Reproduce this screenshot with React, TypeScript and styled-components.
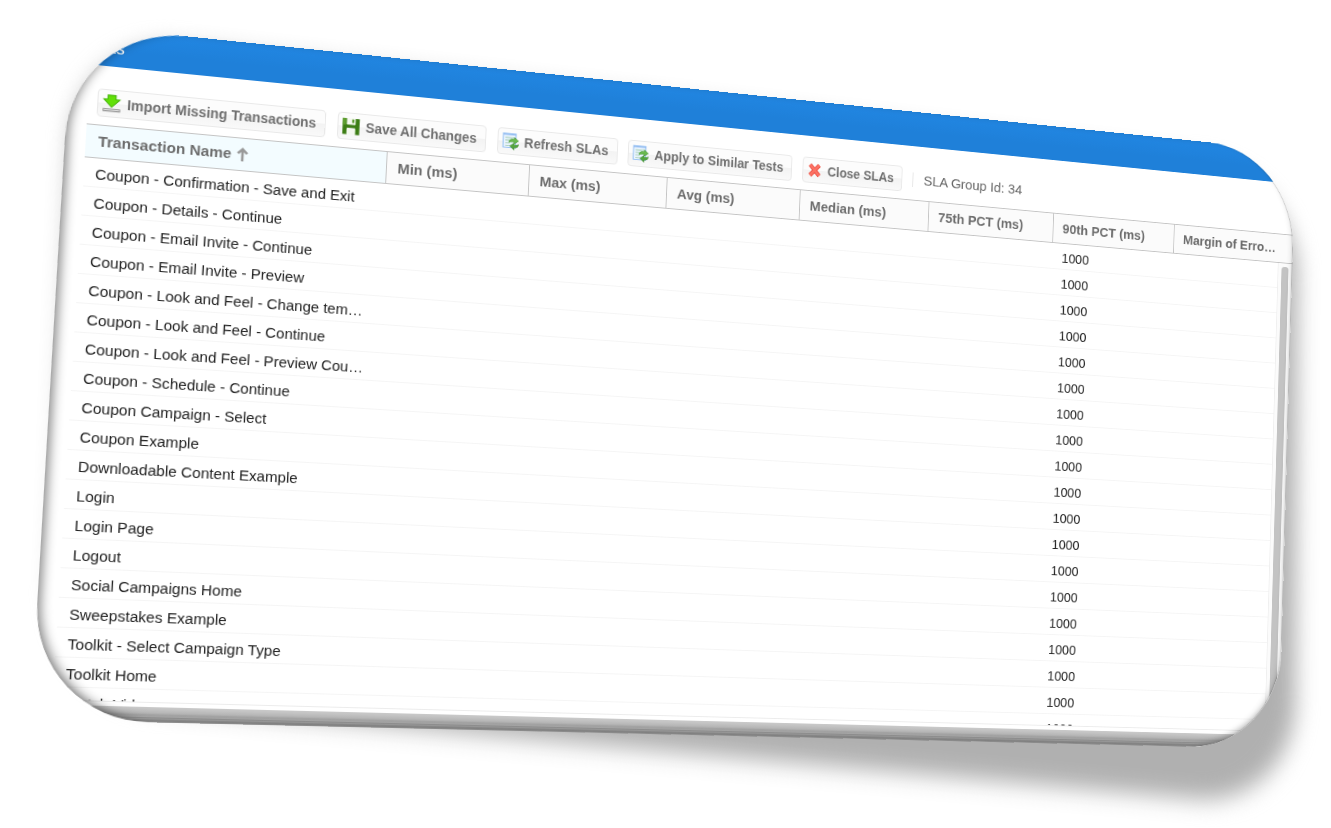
import React from "react";
import styled, { createGlobalStyle, css } from "styled-components";

type Pt = [number, number];

const W = 1373;
const H = 685;

/* Solves the projective map that sends four source points to four screen points. */
function project(src: Pt[], dst: Pt[]): string {
  const m: number[][] = [];
  for (let i = 0; i < 4; i++) {
    const [x, y] = src[i];
    const [u, v] = dst[i];
    m.push([x, y, 1, 0, 0, 0, -u * x, -u * y, u]);
    m.push([0, 0, 0, x, y, 1, -v * x, -v * y, v]);
  }
  for (let c = 0; c < 8; c++) {
    let p = c;
    for (let r = c + 1; r < 8; r++) if (Math.abs(m[r][c]) > Math.abs(m[p][c])) p = r;
    [m[c], m[p]] = [m[p], m[c]];
    for (let r = 0; r < 8; r++) {
      if (r === c) continue;
      const f = m[r][c] / m[c][c];
      for (let k = c; k < 9; k++) m[r][k] -= f * m[c][k];
    }
  }
  const h = m.map((row, i) => row[8] / row[i]);
  return `matrix3d(${[h[0], h[3], 0, h[6], h[1], h[4], 0, h[7], 0, 0, 1, 0, h[2], h[5], 0, 1].join(",")})`;
}

const panelMatrix = project(
  [[20, 97], [1220, 97], [20, 624], [1354, 624]],
  [[86.7, 123.3], [1174, 223.8], [55.2, 657.3], [1265.5, 694.3]]
);
const shadowMatrix = project(
  [[0, 0], [W, 0], [0, H], [W, H]],
  [[76, 36], [1298, 172], [52, 696], [1295, 808]]
);

const Global = createGlobalStyle`
  html, body { margin: 0; background: #fff; }
  body { font-family: "Liberation Sans", Arial, sans-serif; overflow: hidden; }
`;

const Stage = styled.main`
  position: relative;
  width: 1331px;
  height: 828px;
  overflow: hidden;
  background: #fff;
`;

const Shadow = styled.div`
  position: absolute;
  top: 0;
  left: 0;
  width: ${W}px;
  height: ${H}px;
  border-radius: 112px;
  background: #b0b0b0;
  filter: blur(12px);
  transform-origin: 0 0;
  transform: ${shadowMatrix};
`;

const Panel = styled.section`
  position: absolute;
  top: 0;
  left: 0;
  width: ${W}px;
  height: ${H}px;
  display: flex;
  flex-direction: column;
  overflow: hidden;
  border-radius: 112px;
  background: #fff;
  transform-origin: 0 0;
  transform: ${panelMatrix};
`;

const TitleBar = styled.header`
  flex: none;
  height: 38px;
  line-height: 40px;
  padding-left: 12px;
  color: #fff;
  font-size: 17px;
  background: linear-gradient(#2186e2, #1f80d9 60%);
`;

const Toolbar = styled.div`
  flex: none;
  height: 59px;
  box-sizing: border-box;
  padding: 23px 0 0 29px;
  display: flex;
  align-items: flex-start;
  gap: 11.6px;
`;

const ToolButton = styled.button`
  display: flex;
  align-items: center;
  gap: 6px;
  height: 28px;
  box-sizing: border-box;
  padding: 0 9px 0 4px;
  border: 1px solid #e9e9e9;
  border-radius: 4px;
  background: linear-gradient(#fcfcfc 0 48%, #f3f3f3 52%, #f9f9f9);
  color: #707070;
  font: bold 13.9px "Liberation Sans", Arial, sans-serif;
  white-space: nowrap;
  svg { width: 18px; height: 18px; flex: none; }
`;

const Separator = styled.span`
  width: 1px;
  height: 16px;
  margin: 6px 1px 0 0;
  background: #e4e4e4;
`;

const GroupId = styled.span`
  line-height: 28px;
  font-size: 15.4px;
  color: #666;
`;

const Grid = styled.div`
  flex: none;
  height: 569px;
  box-sizing: border-box;
  margin-left: 20px;
  overflow: hidden;
  border-bottom: 1px solid #ececec;
`;

const HeadRow = styled.div`
  display: flex;
  height: 34px;
  box-sizing: border-box;
  border-top: 1px solid #c4c4c4;
  border-bottom: 1px solid #c4c4c4;
  background: #fbfbfb;
`;

const cell = css`
  flex: none;
  box-sizing: border-box;
  padding: 0 11px;
  overflow: hidden;
  text-overflow: ellipsis;
  white-space: nowrap;
`;

const HeadCell = styled.div<{ $w: number; $sorted?: boolean }>`
  ${cell}
  padding-right: 16px;
  width: ${(p) => p.$w}px;
  border-left: 1px solid ${(p) => (p.$sorted ? "transparent" : "#c4c4c4")};
  line-height: 32px;
  font-size: 15.2px;
  font-weight: bold;
  color: #6c6c6c;
  background: ${(p) => (p.$sorted ? "#f3fcff" : "#fbfbfb")};
  svg { margin-left: 5px; vertical-align: -2px; }
`;

const Body = styled.div`
  display: flex;
`;

const Rows = styled.div`
  flex: none;
  width: 1334px;
  overflow: hidden;
`;

const Row = styled.div`
  display: flex;
  height: 29px;
  box-sizing: border-box;
  border-bottom: 1px solid #f5f5f5;
  font-size: 15.1px;
  color: #222;
`;

const Cell = styled.div<{ $w: number }>`
  ${cell}
  padding-top: 2px;
  line-height: 27px;
  width: ${(p) => p.$w}px;
  & + & { padding-left: 12px; }
`;

const Track = styled.div`
  flex: none;
  width: 19px;
  box-sizing: border-box;
  padding: 4px 0 0 4px;
  border-left: 1px solid #efefef;
  background: #fbfbfb;
`;

const Thumb = styled.div`
  height: 620px;
  width: 9px;
  border-radius: 4px;
  background: #c3c3c3;
`;

const Foot = styled.div`
  flex: none;
  height: 15px;
  margin-top: auto;
  background: linear-gradient(#cacaca, #b8b8b8 40%, #a4a4a4 55%, #bebebe 60%, #9c9c9c 72%, #b6b6b6 76%, #a4a4a4 88%, #dadada);
`;

const Bevel = styled.div`
  position: absolute;
  inset: 0;
  border-radius: inherit;
  pointer-events: none;
  box-shadow:
    inset 6px -3px 11px -3px rgba(0, 0, 0, 0.48),
    inset -3px -4px 8px -3px rgba(0, 0, 0, 0.2),
    inset -1px 0 1px rgba(0, 0, 0, 0.2);
`;

const DownloadIcon = () => (
  <svg viewBox="0 0 16 16">
    <path d="M4.500.7h7v3.600H15L8 11.300 1 4.300h3.500z" fill="#62e008" stroke="#3fb006" strokeWidth=".8" />
    <path d="M.8 13h14.400v1.900H.8z" fill="#ddd" stroke="#888" strokeWidth=".7" />
  </svg>
);

const SaveIcon = () => (
  <svg viewBox="0 0 16 16">
    <path d="M.3.800h3.900V6.500h7.600V.8h3.900V15.500h-3.900v-6H4.200v6H.3z" fill="#3c7d14" />
    <path d="M4.200.8h7.600V6.500H4.200zM4.200 10.500h7.600v5H4.200z" fill="#f4f9ee" />
    <path d="M8.800 1.600h2v3.200h-2z" fill="#5c9c30" />
    <path d="M.3.8h3v6h-3z" fill="#5fa030" />
  </svg>
);

const RefreshIcon = () => (
  <svg viewBox="0 0 16 16">
    <path d="M1 .8h12v13H1z" fill="#eaf4ff" stroke="#9cc4f4" />
    <path d="M1 1.600h12" stroke="#86b4ee" />
    <path d="M3 4.500h8M3 7h4M3 9.500h4M3 12h4" stroke="#b0d4c0" />
    <path d="M6.500 9c0-3 2-3.500 5-3.500V4l4 3-4 3V8C9 8 8 8 6.500 9z" fill="#6aba4e" stroke="#4a9a38" strokeWidth=".5" />
    <path d="M15.500 10.500c0 3-2 3-4 3V15.500l-4-3.200 4-3v1.800c1.500 0 2.500.2 4-.6z" fill="#55a63e" stroke="#3d8a30" strokeWidth=".5" />
  </svg>
);

const CloseIcon = () => (
  <svg viewBox="0 0 16 16">
    <path d="M3.300 2.800l9.400 10.200M12.700 2.800l-9.400 10.200" stroke="#ee5145" strokeWidth="4" />
    <path d="M3.300 2.800l9.400 10.200M12.700 2.800l-9.400 10.200" stroke="#fc7264" strokeWidth="2.200" />
  </svg>
);

const SortArrow = () => (
  <svg width="12" height="14" viewBox="0 0 12 14">
    <path d="M6 14V2.500M1.300 6.200L6 1.800 10.700 6.200" fill="none" stroke="#999" strokeWidth="2.500" />
  </svg>
);

const buttons = [
  { label: "Import Missing Transactions", Icon: DownloadIcon },
  { label: "Save All Changes", Icon: SaveIcon },
  { label: "Refresh SLAs", Icon: RefreshIcon },
  { label: "Apply to Similar Tests", Icon: RefreshIcon },
  { label: "Close SLAs", Icon: CloseIcon },
];

const metrics = ["Min (ms)", "Max (ms)", "Avg (ms)", "Median (ms)", "75th PCT (ms)", "90th PCT (ms)", "Margin of Error (%)"];

const transactions = [
  "Coupon - Confirmation - Save and Exit",
  "Coupon - Details - Continue",
  "Coupon - Email Invite - Continue",
  "Coupon - Email Invite - Preview",
  "Coupon - Look and Feel - Change template",
  "Coupon - Look and Feel - Continue",
  "Coupon - Look and Feel - Preview Coupon",
  "Coupon - Schedule - Continue",
  "Coupon Campaign - Select",
  "Coupon Example",
  "Downloadable Content Example",
  "Login",
  "Login Page",
  "Logout",
  "Social Campaigns Home",
  "Sweepstakes Example",
  "Toolkit - Select Campaign Type",
  "Toolkit Home",
  "Watch Video",
];

export default function App() {
  return (
    <Stage>
      <Global />
      <Shadow />
      <Panel>
        <TitleBar>SLAs</TitleBar>
        <Toolbar>
          {buttons.map(({ label, Icon }) => (
            <ToolButton key={label}>
              <Icon />
              {label}
            </ToolButton>
          ))}
          <Separator />
          <GroupId>SLA Group Id: 34</GroupId>
        </Toolbar>
        <Grid>
          <HeadRow>
            <HeadCell $w={300} $sorted>
              Transaction Name
              <SortArrow />
            </HeadCell>
            {metrics.map((m) => (
              <HeadCell key={m} $w={150}>{m}</HeadCell>
            ))}
          </HeadRow>
          <Body>
            <Rows>
              {transactions.map((t) => (
                <Row key={t}>
                  <Cell $w={300}>{t}</Cell>
                  {metrics.slice(0, 6).map((m, i) => (
                    <Cell key={m} $w={150}>{i === 5 ? "1000" : ""}</Cell>
                  ))}
                </Row>
              ))}
            </Rows>
            <Track>
              <Thumb />
            </Track>
          </Body>
        </Grid>
        <Foot />
        <Bevel />
      </Panel>
    </Stage>
  );
}
